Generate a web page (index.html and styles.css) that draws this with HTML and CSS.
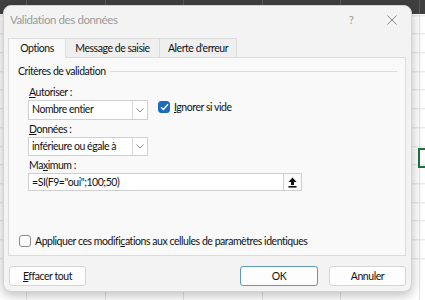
FILE: index.html
```html
<!DOCTYPE html>
<html lang="fr">
<head>
  <meta charset="UTF-8">
  <title>Validation des données</title>
  <link rel="stylesheet" href="styles.css">
</head>
<body>
  <div class="sheet">
    <div class="col-header">
      <div class="hcell corner"></div>
      <div class="hcell">C</div>
      <div class="hcell">D</div>
      <div class="hcell">E</div>
      <div class="hcell">F</div>
      <div class="hcell">G</div>
    </div>
    <div class="grid"></div>
    <div class="active-cell"></div>
  </div>

  <div class="dialog">
    <div class="titlebar">
      <div class="title">Validation des données</div>
      <div class="help">?</div>
      <div class="close">
        <svg width="10" height="10" viewBox="0 0 10 10"><path d="M0.5 0.5 L9.5 9.5 M9.5 0.5 L0.5 9.5" stroke="#8a8a8a" stroke-width="1"/></svg>
      </div>
    </div>

    <div class="tabs">
      <div class="tab active">Options</div>
      <div class="tab">Message de saisie</div>
      <div class="tab last">Alerte d'erreur</div>
    </div>

    <div class="panel">
      <div class="group-title">
        <span>Critères de validation</span>
        <div class="group-line"></div>
      </div>

      <div class="fields">
        <div class="label"><u>A</u>utoriser :</div>
        <div class="row">
          <div class="select">
            <div class="select-value">Nombre entier</div>
            <div class="select-arrow">
              <svg width="8" height="5" viewBox="0 0 8 5"><path d="M0.5 0.5 L4 4 L7.5 0.5" fill="none" stroke="#8c8c8c" stroke-width="1"/></svg>
            </div>
          </div>
          <div class="check-row ignore">
            <div class="checkbox checked">
              <svg width="9" height="8" viewBox="0 0 9 8"><path d="M1 4.2 L3.4 6.5 L8 1.2" fill="none" stroke="#fff" stroke-width="1.3"/></svg>
            </div>
            <span><u>I</u>gnorer si vide</span>
          </div>
        </div>

        <div class="label"><u>D</u>onnées :</div>
        <div class="select short">
          <div class="select-value">inférieure ou égale à</div>
          <div class="select-arrow">
            <svg width="8" height="5" viewBox="0 0 8 5"><path d="M0.5 0.5 L4 4 L7.5 0.5" fill="none" stroke="#8c8c8c" stroke-width="1"/></svg>
          </div>
        </div>

        <div class="label">Ma<u>x</u>imum :</div>
        <div class="ref-input">
          <div class="ref-value">=SI(F9="oui";100;50)</div>
          <div class="ref-button">
            <svg width="9" height="11" viewBox="0 0 9 11"><path d="M4.5 0.5 L8.5 5 L6 5 L6 8 L3 8 L3 5 L0.5 5 Z" fill="#111"/><rect x="0.5" y="9" width="8" height="1.6" fill="#111"/></svg>
          </div>
        </div>
      </div>

      <div class="check-row apply">
        <div class="checkbox"></div>
        <span>Appliquer ces modifi<u>c</u>ations aux cellules de paramètres identiques</span>
      </div>
    </div>

    <div class="buttons">
      <div class="btn"><u>E</u>ffacer tout</div>
      <div class="spacer"></div>
      <div class="btn default">OK</div>
      <div class="btn">Annuler</div>
    </div>
  </div>
</body>
</html>
```

FILE: styles.css
```css
body {
  margin: 0;
  width: 425px;
  height: 300px;
  overflow: hidden;
  position: relative;
  font-family: 'Lato', 'Open Sans', sans-serif;
  font-size: 10.5px;
  letter-spacing: -0.45px;
  color: #111;
  background: #fff;
  white-space: nowrap;
}

.sheet {
  width: 425px;
  height: 300px;
}

.col-header {
  display: flex;
  height: 14px;
  background: #404040;
}

.hcell {
  width: 78.6px;
  flex: none;
  border-right: 1px solid #5a5a5a;
  box-sizing: border-box;
  color: #d0d0d0;
  font-size: 10px;
  letter-spacing: 0;
  text-align: center;
  line-height: 16px;
}

.hcell.corner {
  width: 27px;
}

.grid {
  height: 286px;
  background-image:
    repeating-linear-gradient(to right, transparent 0, transparent 26px, #e2e2e2 26px, #e2e2e2 27px, transparent 27px, transparent 78.6px),
    repeating-linear-gradient(to bottom, transparent 0, transparent 17.7px, #e2e2e2 17.7px, #e2e2e2 18.7px);
  background-position: 0 -17px, 0 -16.7px;
}

.active-cell {
  position: absolute;
  left: 418px;
  top: 148px;
  width: 20px;
  height: 16px;
  border: 2px solid #1e7145;
}

.dialog {
  position: absolute;
  left: 3px;
  top: 5px;
  width: 409px;
  height: 287px;
  background: #f3f3f3;
  border: 1px solid #d4d4d4;
  box-sizing: border-box;
  border-radius: 8px;
  box-shadow: 0 3px 12px rgba(0,0,0,0.28);
}

.titlebar {
  display: flex;
  align-items: center;
  height: 32px;
  padding-left: 6px;
}

.title {
  flex: 1;
  color: #9a9a9a;
  font-size: 11.5px;
  letter-spacing: -0.4px;
  margin-top: -5px;
}

.help {
  color: #9a9a9a;
  font-size: 11.5px;
  width: 14px;
  text-align: center;
  margin-top: -5px;
}

.close {
  width: 10px;
  margin: -5px 14px 0 29px;
  display: flex;
}

.tabs {
  display: flex;
  margin-left: 4px;
  height: 19px;
}

.tab {
  line-height: 18px;
  border: 1px solid #dcdcdc;
  border-right: none;
  border-bottom: none;
  background: #efefef;
  box-sizing: border-box;
  height: 19px;
  text-align: center;
}

.tab.active {
  width: 57px;
  background: #f9f9f9;
  height: 20px;
  position: relative;
  z-index: 1;
}

.tab:nth-child(2) {
  width: 94px;
}

.tab.last {
  width: 78px;
  border-right: 1px solid #dcdcdc;
}

.panel {
  margin: 0 5px 0 4px;
  height: 199px;
  background: #f9f9f9;
  border: 1px solid #dcdcdc;
  box-sizing: border-box;
  padding: 6px 8px 0 9px;
  display: flex;
  flex-direction: column;
}

.group-title {
  display: flex;
  align-items: center;
  gap: 4px;
  height: 14px;
}

.group-line {
  flex: 1;
  height: 1px;
  background: #dcdcdc;
}

.fields {
  padding-left: 10px;
  display: flex;
  flex-direction: column;
}

.label {
  height: 14px;
  line-height: 14px;
  margin-top: 2px;
  margin-bottom: 1px;
  padding-left: 1px;
}

.label:first-child {
  margin-top: 7px;
}

.row {
  display: flex;
  align-items: center;
}

.select {
  display: flex;
  width: 120px;
  height: 20px;
  background: #fff;
  border: 1px solid #cfcfcf;
  box-sizing: border-box;
}

.select.short {
  height: 19px;
}

.select-value {
  flex: 1;
  line-height: 17px;
  padding-left: 3px;
}

.select-arrow {
  width: 14px;
  border-left: 1px solid #d8d8d8;
  display: flex;
  align-items: center;
  justify-content: center;
}

.check-row {
  display: flex;
  align-items: center;
  gap: 4px;
}

.checkbox {
  width: 12px;
  height: 12px;
  box-sizing: border-box;
  border: 1px solid #8a8a8a;
  border-radius: 3px;
  background: #fdfdfd;
  display: flex;
  align-items: center;
  justify-content: center;
}

.checkbox.checked {
  background: #1e6cc0;
  border-color: #1e6cc0;
}

.ignore {
  margin-left: 10px;
  margin-top: -6px;
}

.ref-input {
  display: flex;
  width: 274px;
  height: 18px;
  background: #fff;
  border: 1px solid #cfcfcf;
  box-sizing: border-box;
}

.ref-value {
  flex: 1;
  line-height: 16px;
  padding-left: 3px;
}

.ref-button {
  width: 17px;
  border-left: 1px solid #d0d0d0;
  background: #fbfbfb;
  display: flex;
  align-items: center;
  justify-content: center;
}

.apply {
  margin-top: 43px;
  padding-left: 1px;
  height: 14px;
}

.buttons {
  display: flex;
  gap: 11px;
  margin: 10px 5px 0 5px;
}

.spacer {
  flex: 1;
}

.btn {
  width: 77px;
  height: 20px;
  line-height: 19px;
  text-align: center;
  background: #fdfdfd;
  border: 1px solid #d6d6d6;
  border-radius: 3px;
  box-sizing: border-box;
}

.btn.default {
  width: 78px;
  border-color: #5e9ab8;
}
```
